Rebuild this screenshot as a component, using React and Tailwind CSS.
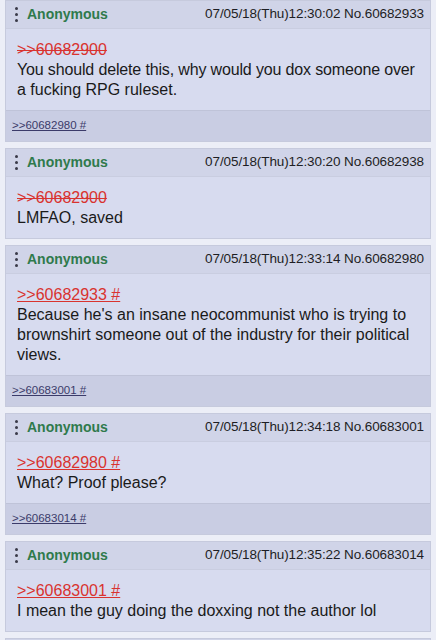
import React from "react";

const posts = [
  {
    date: "07/05/18(Thu)12:30:02",
    no: "60682933",
    quote: ">>60682900",
    dead: true,
    lines: ["You should delete this, why would you dox someone over", "a fucking RPG ruleset."],
    reply: ">>60682980 #",
  },
  {
    date: "07/05/18(Thu)12:30:20",
    no: "60682938",
    quote: ">>60682900",
    dead: true,
    lines: ["LMFAO, saved"],
  },
  {
    date: "07/05/18(Thu)12:33:14",
    no: "60682980",
    quote: ">>60682933 #",
    lines: [
      "Because he's an insane neocommunist who is trying to",
      "brownshirt someone out of the industry for their political",
      "views.",
    ],
    reply: ">>60683001 #",
  },
  {
    date: "07/05/18(Thu)12:34:18",
    no: "60683001",
    quote: ">>60682980 #",
    lines: ["What? Proof please?"],
    reply: ">>60683014 #",
  },
  {
    date: "07/05/18(Thu)12:35:22",
    no: "60683014",
    quote: ">>60683001 #",
    lines: ["I mean the guy doing the doxxing not the author lol"],
  },
];

function Dots() {
  return (
    <div className="flex flex-col gap-[3px] w-[3px] mr-[9px]">
      <span className="block w-[3px] h-[3px] rounded-full bg-[#3a3a48]" />
      <span className="block w-[3px] h-[3px] rounded-full bg-[#3a3a48]" />
      <span className="block w-[3px] h-[3px] rounded-full bg-[#3a3a48]" />
    </div>
  );
}

function Post({ p }) {
  return (
    <div className="border border-[#c6cadd] bg-[#d7dbef] shrink-0">
      <div className="h-[28px] flex items-center pl-[9px] pr-[6px] bg-[#d0d4e8] border-b border-[#c9cde0]">
        <Dots />
        <span className="text-[14px] font-bold text-[#2f7a4c]">Anonymous</span>
        <span className="ml-auto text-[13.5px] text-[#1e1e24] tracking-[-0.1px]">
          {p.date} No.{p.no}
        </span>
      </div>
      <div className="pt-[11px] pb-[10px] pl-[11px] pr-[4px] text-[16px] leading-[20px] text-[#1a1a1a] whitespace-nowrap overflow-hidden">
        <div>
          <span className={p.dead ? "text-[#d9332f] line-through" : "text-[#d9332f] underline"}>
            {p.quote}
          </span>
        </div>
        {p.lines.map((l, i) => (
          <div key={i} className={i === 0 && l.length > 52 ? "tracking-[-0.15px]" : ""}>{l}</div>
        ))}
      </div>
      {p.reply && (
        <div className="h-[31px] flex items-center pl-[6px] bg-[#c9cde3] border-t border-[#bfc3d8]">
          <span className="text-[11.5px] text-[#3b3b6a] underline">{p.reply}</span>
        </div>
      )}
    </div>
  );
}

export default function App() {
  return (
    <div
      className="w-[436px] h-[640px] overflow-hidden bg-[#eceef7] px-[5px] flex flex-col gap-[6px]"
      style={{ fontFamily: '"Liberation Sans", Arial, sans-serif' }}
    >
      {posts.map((p) => (
        <Post key={p.no} p={p} />
      ))}
      <div className="border border-[#c6cadd] bg-[#d0d4e8] h-[28px] shrink-0" />
    </div>
  );
}
